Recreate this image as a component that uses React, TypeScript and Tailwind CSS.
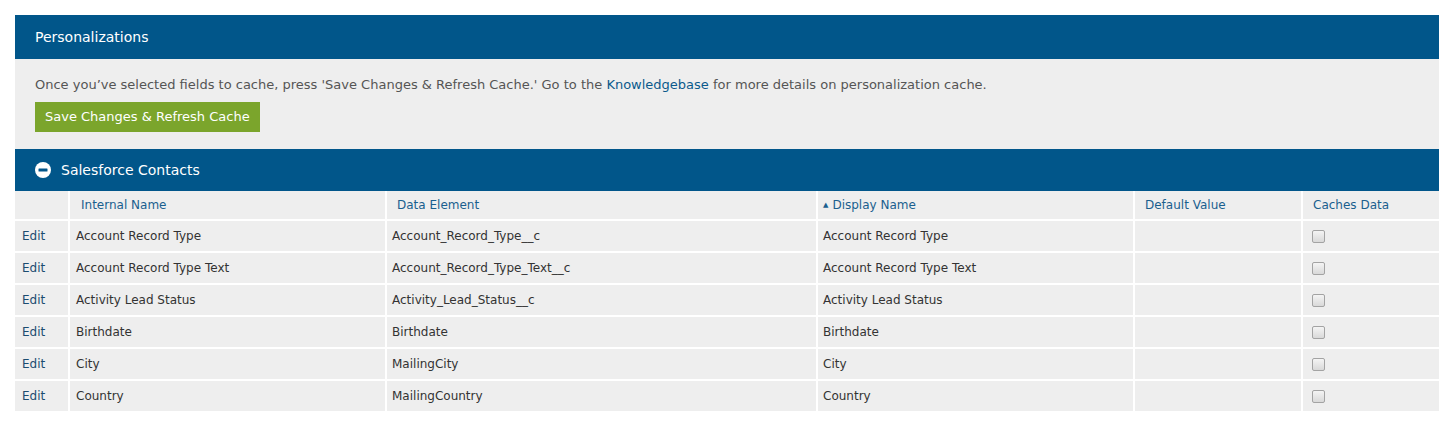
import { Fragment } from 'react';

const font = "font-['Verdana','DejaVu_Sans',sans-serif]";

const rows = [
  { internal: 'Account Record Type', element: 'Account_Record_Type__c', display: 'Account Record Type' },
  { internal: 'Account Record Type Text', element: 'Account_Record_Type_Text__c', display: 'Account Record Type Text' },
  { internal: 'Activity Lead Status', element: 'Activity_Lead_Status__c', display: 'Activity Lead Status' },
  { internal: 'Birthdate', element: 'Birthdate', display: 'Birthdate' },
  { internal: 'City', element: 'MailingCity', display: 'City' },
  { internal: 'Country', element: 'MailingCountry', display: 'Country' },
];

function CollapseIcon() {
  return (
    <svg width="16" height="16" viewBox="0 0 16 16" aria-hidden>
      <circle cx="8" cy="8" r="8" fill="#ffffff" />
      <rect x="3.5" y="6.5" width="9" height="3" rx="0.5" fill="#01558a" />
    </svg>
  );
}

export default function App() {
  return (
    <div className={`${font} bg-white pt-[15px] pb-[15px] min-h-[426px]`}>
      <section className="mx-[15px]">
        <div className="flex h-[44px] items-center bg-[#01568a] px-5">
          <h2 className="text-[14px] text-white">Personalizations</h2>
        </div>
        <div className="bg-[#eeeeee] px-5 pt-[18px] pb-[17px]">
          <p className="text-[13px] leading-[16px] text-[#555555]">
            Once you’ve selected fields to cache, press 'Save Changes &amp; Refresh Cache.' Go to the{' '}
            <a className="text-[#0b5a8c]">Knowledgebase</a> for more details on personalization cache.
          </p>
          <button className="mt-[9px] h-[30px] bg-[#7ba52c] px-[10px] text-[13px] text-white">
            Save Changes &amp; Refresh Cache
          </button>
        </div>

        <div className="flex h-[42px] items-center gap-[10px] bg-[#01568a] px-5">
          <CollapseIcon />
          <h3 className="pt-px text-[14px] text-white">Salesforce Contacts</h3>
        </div>

        <div className="grid grid-cols-[53px_315px_429px_315px_166px_1fr] gap-[2px] bg-white text-[12px]">
          <div className="h-[28px] bg-[#eeeeee]" />
          <div className="flex h-[28px] items-center bg-[#eeeeee] pl-[11px] text-[#1a5f8e]">Internal Name</div>
          <div className="flex h-[28px] items-center bg-[#eeeeee] pl-[10px] text-[#1a5f8e]">Data Element</div>
          <div className="flex h-[28px] items-center gap-[4px] bg-[#eeeeee] pl-[5px] text-[#1a5f8e]">
            <span className="text-[7px] leading-none">▲</span>
            Display Name
          </div>
          <div className="flex h-[28px] items-center bg-[#eeeeee] pl-[10px] text-[#1a5f8e]">Default Value</div>
          <div className="flex h-[28px] items-center bg-[#eeeeee] pl-[10px] text-[#1a5f8e]">Caches Data</div>

          {rows.map((r) => (
            <Fragment key={r.internal}>
              <div className="flex h-[30px] items-center bg-[#eeeeee] pl-[7px] text-[#1b4c70]">Edit</div>
              <div className="flex h-[30px] items-center bg-[#eeeeee] pl-[6px] text-[#333333]">{r.internal}</div>
              <div className="flex h-[30px] items-center bg-[#eeeeee] pl-[5px] text-[#333333]">{r.element}</div>
              <div className="flex h-[30px] items-center bg-[#eeeeee] pl-[5px] text-[#333333]">{r.display}</div>
              <div className="h-[30px] bg-[#eeeeee]" />
              <div className="flex h-[30px] items-center bg-[#eeeeee] pl-[9px]">
                <input
                  type="checkbox"
                  className="h-[13px] w-[13px] appearance-none rounded-[2px] border border-[#a3a3a3] bg-gradient-to-b from-[#f4f4f4] to-[#d9d9d9]"
                />
              </div>
            </Fragment>
          ))}
        </div>
      </section>
    </div>
  );
}
